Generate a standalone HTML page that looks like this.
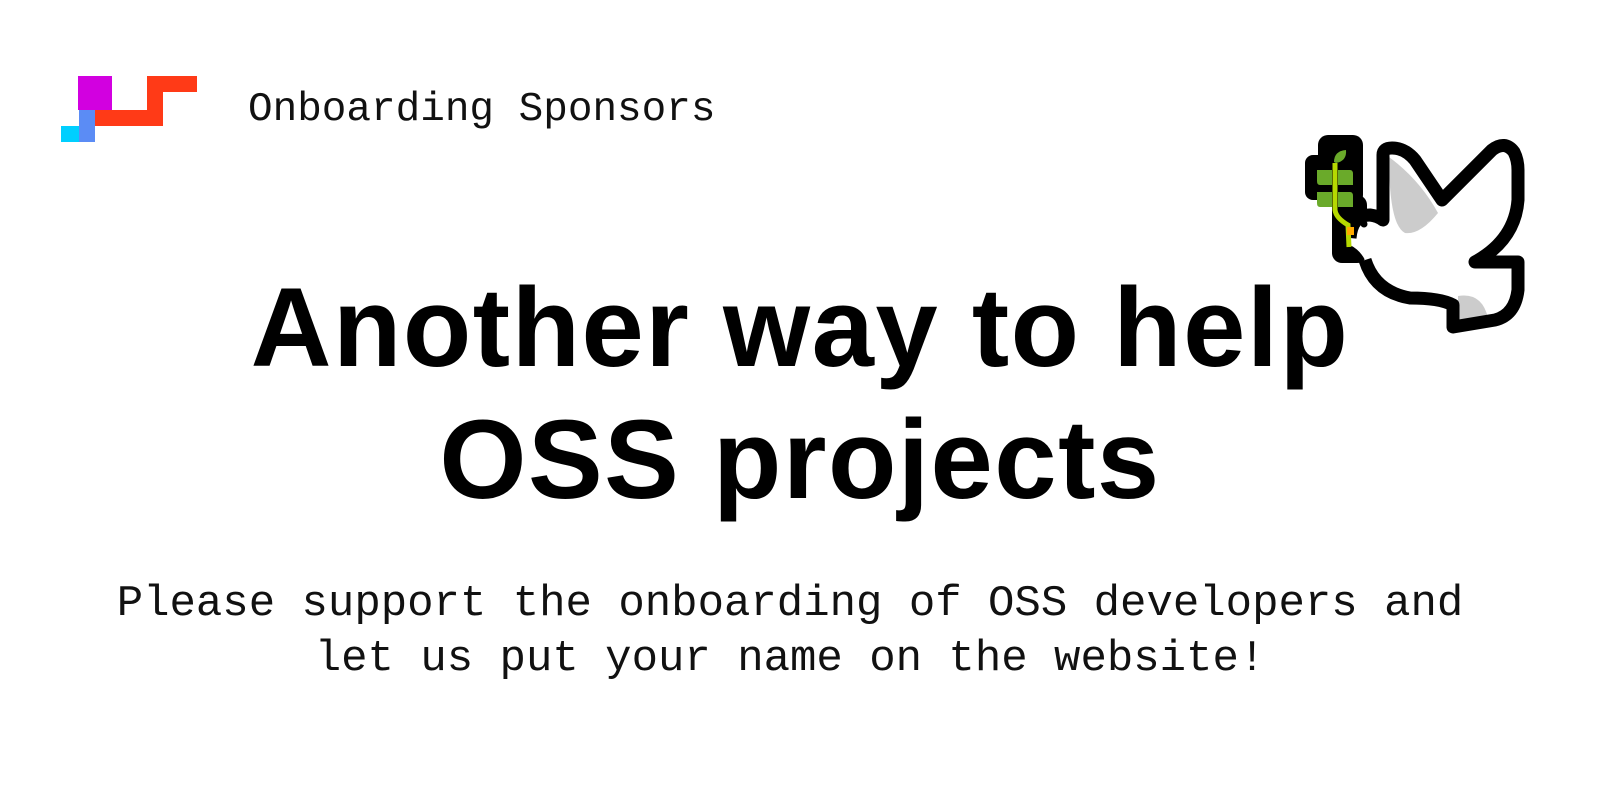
<!DOCTYPE html>
<html><head><meta charset="utf-8"><style>
body{margin:0;width:1600px;height:800px;background:#fff;position:relative;overflow:hidden;font-family:"Liberation Sans",sans-serif}
.a{position:absolute}
.mono{font-family:"Liberation Mono",monospace;color:#111;white-space:pre}
h1{position:absolute;margin:0;left:0;width:1600px;text-align:center;font-size:112px;font-weight:bold;letter-spacing:1.5px;line-height:1;color:#000}
</style></head><body>
<div class="a" style="left:78px;top:76px;width:34px;height:34px;background:#d200e0"></div>
<div class="a" style="left:61px;top:126px;width:18px;height:16px;background:#00cfff"></div>
<div class="a" style="left:79px;top:110px;width:16px;height:32px;background:#5b8cf5"></div>
<div class="a" style="left:95px;top:110px;width:68px;height:16px;background:#ff3a17"></div>
<div class="a" style="left:147px;top:76px;width:16px;height:50px;background:#ff3a17"></div>
<div class="a" style="left:147px;top:76px;width:50px;height:16px;background:#ff3a17"></div>
<div class="a mono" style="left:248px;top:87px;font-size:41px;line-height:46px">Onboarding Sponsors</div>
<svg style="position:absolute;left:1270px;top:120px;width:270px;height:220px;display:block" width="270" height="220" viewBox="0 0 270 220">
<rect x="35" y="35" width="30" height="45" rx="8" fill="#000"/>
<rect x="48" y="15" width="45" height="70" rx="10" fill="#000"/>
<rect x="62" y="75" width="35" height="68" rx="10" fill="#000"/>
<path id="d" d="M80 118 Q82 95 100 95 Q108 96 113 100 L113 35 Q113 28 122 28 Q135 28 145 40 L172 80 L222 30 Q235 20 244 32 Q248 40 248 50 L248 80 Q245 120 205 142 L248 142 L248 170 Q245 195 225 200 L183 207 L183 185 Q170 178 140 178 Q105 172 95 140 Q90 130 80 125 Z" fill="#fff"/>
<path d="M119 37 Q150 60 168 93 Q150 115 135 113 Q119 105 119 37Z" fill="#ccc"/>
<path d="M188 176 Q212 172 218 198 L188 202Z" fill="#ccc"/>
<path d="M80 118 Q82 95 100 95 Q108 96 113 100 L113 35 Q113 28 122 28 Q135 28 145 40 L172 80 L222 30 Q235 20 244 32 Q248 40 248 50 L248 80 Q245 120 205 142 L248 142 L248 170 Q245 195 225 200 L183 207 L183 185 Q170 178 140 178 Q105 172 95 140" fill="none" stroke="#000" stroke-width="13" stroke-linejoin="round"/>
<path d="M47 50 H62 V65 H50 Q47 65 47 61Z M68 50 H80 Q83 50 83 54 V65 H68Z M47 72 H62 V87 H50 Q47 87 47 83Z M68 72 H80 Q83 72 83 76 V87 H68Z" fill="#6aaa2a"/>
<path d="M64 42 Q64 31 76 30 Q77 41 66 43Z" fill="#6aaa2a"/>
<path d="M65 43 L65 90 Q66 98 78 105 L79 127" stroke="#b6d900" stroke-width="5" fill="none"/>
<path d="M77 107 L84 107 L84 115 L77 115Z" fill="#ffaa00"/>
<circle cx="94" cy="104" r="3.5" fill="#000"/>
</svg>
<h1 style="top:272px">Another way to help</h1>
<h1 style="top:404px">OSS projects</h1>
<div class="a mono" style="left:0;width:1580px;text-align:center;top:577px;font-size:44px;line-height:55px">Please support the onboarding of OSS developers and
let us put your name on the website!</div>
</body></html>
